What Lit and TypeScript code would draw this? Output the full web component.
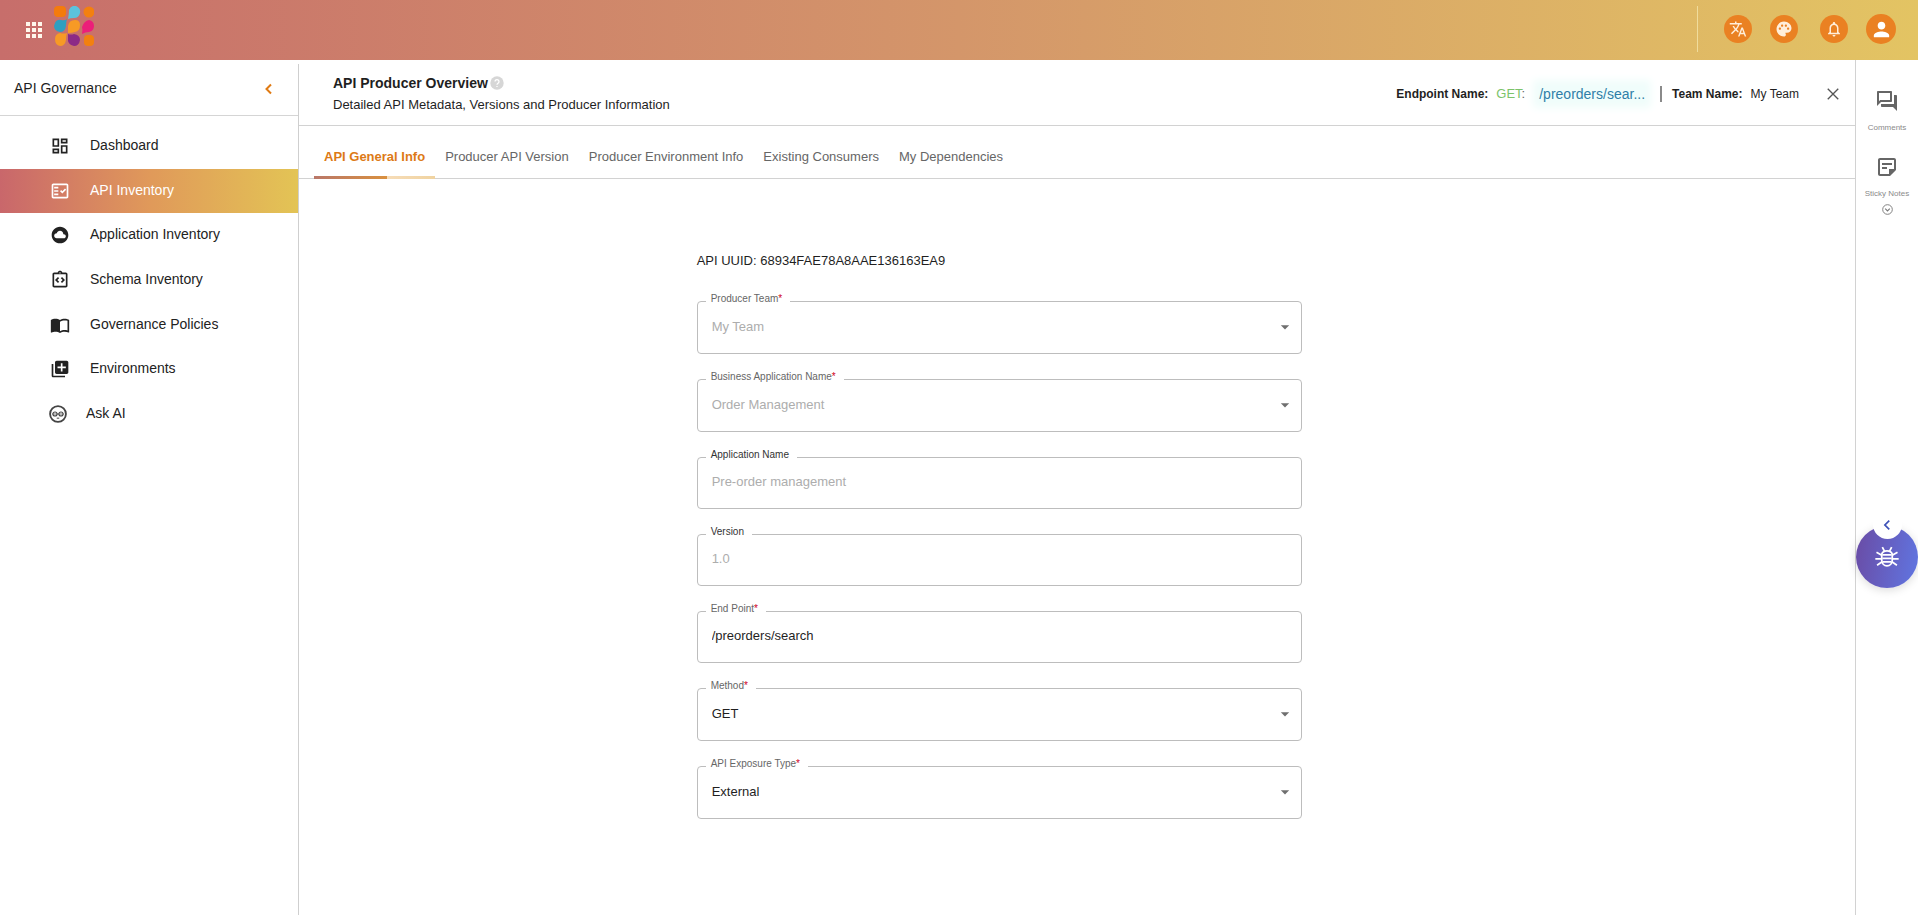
import { LitElement, html, css, svg, nothing, TemplateResult, SVGTemplateResult } from "lit";
import { customElement, property } from "lit/decorators.js";
import { classMap } from "lit/directives/class-map.js";

const icon = (body: SVGTemplateResult, size = 24, cls = ""): TemplateResult => html`
  <svg class=${cls} width=${size} height=${size} viewBox="0 0 24 24" fill="currentColor" aria-hidden="true">${body}</svg>
`;

const icons = {
  dashboard: svg`<path d="M19 5v2h-4V5h4M9 5v6H5V5h4m10 8v6h-4v-6h4M9 17v2H5v-2h4M21 3h-8v6h8V3zM11 3H3v10h8V3zm10 8h-8v10h8V11zm-10 4H3v6h8v-6z"/>`,
  factCheck: svg`<path fill-rule="evenodd" d="M20 3H4c-1.1 0-2 .9-2 2v14c0 1.1.9 2 2 2h16c1.1 0 2-.9 2-2V5c0-1.1-.9-2-2-2zm0 16H4V5h16v14z"/><path d="M19.41 10.42 17.99 9l-3.17 3.17-1.41-1.42L12 12.16 14.82 15zM5 7h5v2H5zM5 11h5v2H5zM5 15h5v2H5z"/>`,
  cloudCircle: svg`<path d="M12 2C6.48 2 2 6.48 2 12s4.48 10 10 10 10-4.48 10-10S17.52 2 12 2zm4.5 14H8c-1.66 0-3-1.34-3-3s1.34-3 3-3l.14.01C8.58 8.28 10.13 7 12 7c2.21 0 4 1.79 4 4h.5c1.38 0 2.5 1.12 2.5 2.5S17.88 16 16.5 16z"/>`,
  schema: svg`<path d="M11 14.17 8.83 12 11 9.83 9.59 8.41 6 12l3.59 3.59zM14.41 15.59 18 12l-3.59-3.59L13 9.83 15.17 12 13 14.17z"/><path d="M19 3h-4.18C14.4 1.84 13.3 1 12 1s-2.4.84-2.82 2H5c-1.1 0-2 .9-2 2v14c0 1.1.9 2 2 2h14c1.1 0 2-.9 2-2V5c0-1.1-.9-2-2-2zm-7-.25c.41 0 .75.34.75.75s-.34.75-.75.75-.75-.34-.75-.75.34-.75.75-.75zM19 19H5V5h14v14z"/>`,
  book: svg`<path d="M21 5c-1.11-.35-2.33-.5-3.5-.5-1.95 0-4.05.4-5.5 1.5-1.45-1.1-3.55-1.5-5.5-1.5S2.45 4.9 1 6v14.65c0 .25.25.5.5.5.1 0 .15-.05.25-.05C3.1 20.45 5.05 20 6.5 20c1.95 0 4.05.4 5.5 1.5 1.35-.85 3.8-1.5 5.5-1.5 1.65 0 3.35.3 4.75 1.05.1.05.15.05.25.05.25 0 .5-.25.5-.5V6c-.6-.45-1.25-.75-2-1zm0 13.5c-1.1-.35-2.3-.5-3.5-.5-1.7 0-4.15.65-5.5 1.5V8c1.35-.85 3.8-1.5 5.5-1.5 1.2 0 2.4.15 3.5.5v11.5z"/>`,
  queue: svg`<path d="M4 6H2v14c0 1.1.9 2 2 2h14v-2H4V6zm16-4H8c-1.1 0-2 .9-2 2v12c0 1.1.9 2 2 2h12c1.1 0 2-.9 2-2V4c0-1.1-.9-2-2-2zm-1 9h-4v4h-2v-4H9V9h4V5h2v4h4v2z"/>`,
  robot: svg`<g fill="none" stroke="currentColor"><circle cx="12" cy="12" r="9.5" stroke-width="2.2"/><circle cx="8.4" cy="12" r="2.4" stroke-width="1.4"/><circle cx="15.6" cy="12" r="2.4" stroke-width="1.4"/><path d="M10.8 12h2.4M5.2 12H6M18 12h.8M10.5 17h3" stroke-width="1.2"/></g><circle cx="8.4" cy="12" r=".8"/><circle cx="15.6" cy="12" r=".8"/>`,
  forum: svg`<path d="M15 4v7H5.17L4 12.17V4h11m1-2H3c-.55 0-1 .45-1 1v14l4-4h10c.55 0 1-.45 1-1V3c0-.55-.45-1-1-1zm5 4h-2v9H6v2c0 .55.45 1 1 1h11l4 4V7c0-.55-.45-1-1-1z"/>`,
  note: svg`<path d="M19 5v9h-5v5H5V5h14m0-2H5c-1.1 0-2 .9-2 2v14c0 1.1.9 2 2 2h10l6-6V5c0-1.1-.9-2-2-2zm-7 11H7v-2h5v2zm5-4H7V8h10v2z"/><path d="M14 14h6l-6 6z"/>`,
  caretCircle: svg`<circle cx="12" cy="12" r="10.5" fill="none" stroke="currentColor" stroke-width="2"/><path d="m7 10 5 5 5-5" fill="none" stroke="currentColor" stroke-width="2.4"/>`,
  chevronLeft: svg`<path d="M15.41 7.41 14 6l-6 6 6 6 1.41-1.41L10.83 12z"/>`,
  close: svg`<path d="m5 5 14 14M19 5 5 19" fill="none" stroke="currentColor" stroke-width="1.8"/>`,
  apps: svg`<path d="M4 8h4V4H4v4zm6 12h4v-4h-4v4zm-6 0h4v-4H4v4zm0-6h4v-4H4v4zm6 0h4v-4h-4v4zm6-10v4h4V4h-4zm-6 4h4V4h-4v4zm6 6h4v-4h-4v4zm0 6h4v-4h-4v4z"/>`,
  help: svg`<circle cx="12" cy="12" r="11.5" fill="#d6d6d6"/><path d="M8.6 9.6a3.4 3.4 0 1 1 5.2 2.9c-1.2.8-1.8 1.3-1.8 2.7M12 17v2" fill="none" stroke="#fff" stroke-width="2.2"/>`,
  translate: svg`<path d="m12.87 15.07-2.54-2.51.03-.03c1.74-1.94 2.98-4.17 3.71-6.53H17V4h-7V2H8v2H1v1.99h11.17C11.5 7.92 10.44 9.75 9 11.35 8.07 10.32 7.3 9.19 6.69 8h-2c.73 1.63 1.73 3.17 2.98 4.56l-5.09 5.02L4 19l5-5 3.11 3.11.76-2.04zM18.5 10h-2L12 22h2l1.12-3h4.75L21 22h2l-4.5-12zm-2.62 7 1.62-4.33L19.12 17h-3.24z"/>`,
  palette: svg`<path d="M12 2C6.49 2 2 6.49 2 12s4.49 10 10 10c1.38 0 2.5-1.12 2.5-2.5 0-.61-.23-1.2-.64-1.67-.08-.1-.13-.21-.13-.33 0-.28.22-.5.5-.5H16c3.31 0 6-2.69 6-6 0-4.96-4.49-9-10-9zm5.5 11c-.83 0-1.5-.67-1.5-1.5s.67-1.5 1.5-1.5 1.5.67 1.5 1.5-.67 1.5-1.5 1.5zm-3-4c-.83 0-1.5-.67-1.5-1.5S13.67 6 14.5 6s1.5.67 1.5 1.5S15.33 9 14.5 9zM5 11.5c0-.83.67-1.5 1.5-1.5s1.5.67 1.5 1.5S7.33 13 6.5 13 5 12.33 5 11.5zm6-4c0 .83-.67 1.5-1.5 1.5S8 8.33 8 7.5 8.67 6 9.5 6s1.5.67 1.5 1.5z"/>`,
  bell: svg`<path d="M12 22c1.1 0 2-.9 2-2h-4c0 1.1.9 2 2 2zm6-6v-5c0-3.07-1.63-5.64-4.5-6.32V4c0-.83-.67-1.5-1.5-1.5s-1.5.67-1.5 1.5v.68C7.64 5.36 6 7.92 6 11v5l-2 2v1h16v-1l-2-2zm-2 1H8v-6c0-2.48 1.51-4.5 4-4.5s4 2.02 4 4.5v6z"/>`,
  person: svg`<path d="M12 12c2.21 0 4-1.79 4-4s-1.79-4-4-4-4 1.79-4 4 1.79 4 4 4zm0 2c-2.67 0-8 1.34-8 4v2h16v-2c0-2.66-5.33-4-8-4z"/>`,
  bug: svg`<g fill="none" stroke="currentColor" stroke-width="1.5"><path d="M7.5 9.5c.5-1.7 2.3-2.7 4.5-2.7s4 1 4.5 2.7v5c0 3-2 5-4.5 5s-4.5-2-4.5-5z"/><path d="M9.8 7 8 3.5M14.2 7 16 3.5M7.5 10.5 3 8M7.5 13.5H2M7.8 16l-4.3 3M16.500 10.500 21 8M16.500 13.500H22M16.200 16l4.300 3M8 10.200h8M8 13.200h8M8.300 16.200h7.400"/></g>`,
  arrowDown: svg`<path d="m7 10 5 5 5-5z"/>`,
};

@customElement("brand-logo")
export class BrandLogo extends LitElement {
  static styles = css`
    :host { display: block; line-height: 0; }
  `;
  render() {
    return html`
      <svg width="40" height="40" viewBox="0 0 40 40" role="img" aria-label="Home">
        <rect x="0" y="0" width="12" height="11" rx="4" fill="#f47b0c"/>
        <path d="M15 4q2-5 7-4 5 2 4 7-1 5-6 5-4 0-6 1 1-5 1-9z" fill="#5cc3dc"/>
        <circle cx="35" cy="6" r="5.5" fill="#f3800f"/>
        <path d="M1 17q2-4 6-3 4 1 6-1-1 3-1 7-1 6-6 6-6-1-6-6z" fill="#2f9fc0"/>
        <path d="M14 20q1-6 7-6 5 0 5 5 0 6-5 7-3 1-7 1 0-4 0-7z" fill="#f79a25"/>
        <path d="M28 21q2-6 7-7 5 1 5 6 0 5-5 6-4 0-7 2 1-4 0-7z" fill="#ec1f79"/>
        <path d="M1 33q0-5 5-6 4 1 7 0-1 3-1 7-1 6-6 6-5-1-5-7z" fill="#f79a25"/>
        <path d="M14 28q3 1 6 0 6 1 6 6-1 6-6 6-5-1-6-5 0-3 0-7z" fill="#8c2a86"/>
        <rect x="30" y="29" width="10" height="11" rx="4" fill="#f3800f"/>
      </svg>
    `;
  }
}

@customElement("side-nav")
export class SideNav extends LitElement {
  static styles = css`
    :host { display: block; }
    .head {
      display: flex; align-items: center; justify-content: space-between;
      box-sizing: border-box; height: 52px; padding: 0 22px 4px 14px;
      border-bottom: 1px solid #d5d5d5; font-size: 14px;
    }
    .collapse {
      display: flex; padding: 2px 0 0; border: 0; background: none; color: #e07a12; cursor: pointer;
    }
    .list {
      display: grid; grid-auto-rows: 1fr; height: 312px;
      margin: 8px 0 0; padding: 0; list-style: none;
    }
    .link {
      display: flex; align-items: center; gap: 20px; height: 100%;
      padding-left: 50px; color: #222; font-size: 14px; text-decoration: none;
    }
    .text { padding-bottom: 2px; }
    .active {
      color: #fff;
      background: linear-gradient(90deg, #c9676b 0%, #e0995a 50%, #e3c455 100%);
    }
    .assistant { padding-left: 48px; gap: 18px; }
    .assistant .glyph { color: #444; }
  `;

  private items = [
    { label: "Dashboard", glyph: icons.dashboard },
    { label: "API Inventory", glyph: icons.factCheck, active: true },
    { label: "Application Inventory", glyph: icons.cloudCircle },
    { label: "Schema Inventory", glyph: icons.schema },
    { label: "Governance Policies", glyph: icons.book },
    { label: "Environments", glyph: icons.queue },
    { label: "Ask AI", glyph: icons.robot, assistant: true },
  ];

  render() {
    return html`
      <div class="head">
        <span>API Governance</span>
        <button class="collapse" aria-label="Collapse menu">
          <svg width="14" height="14" viewBox="0 0 14 14" aria-hidden="true">
            <path d="M9 2.500 4.500 7 9 11.500" fill="none" stroke="currentColor" stroke-width="2"/>
          </svg>
        </button>
      </div>
      <nav aria-label="API Governance">
        <ul class="list">
          ${this.items.map(
            (i) => html`
              <li>
                <a href="#" aria-current=${i.active ? "page" : nothing}
                  class=${classMap({ link: true, active: !!i.active, assistant: !!i.assistant })}>
                  ${icon(i.glyph, 20, "glyph")}<span class="text">${i.label}</span>
                </a>
              </li>
            `
          )}
        </ul>
      </nav>
    `;
  }
}

@customElement("outlined-field")
export class OutlinedField extends LitElement {
  @property() label = "";
  @property() value = "";
  @property({ type: Boolean }) required = false;
  @property({ type: Boolean }) disabled = false;
  @property({ type: Boolean }) dropdown = false;

  static styles = css`
    :host { display: block; }
    .box {
      min-width: 0; margin: 0; padding: 0 0 8px;
      border: 1px solid #bdbdbd; border-radius: 4px;
    }
    .caption {
      margin-left: 8px; padding: 0 8px 4px 5px;
      color: #666; font-size: 10px; line-height: 12px;
    }
    .plain { color: #333; }
    .star { color: #d0021b; }
    .control { display: grid; align-items: center; }
    .input {
      grid-area: 1 / 1; box-sizing: border-box; width: 100%; height: 35px;
      margin: 0; padding: 0 14px 2px; border: 0; outline: 0; background: none;
      appearance: none; border-radius: 0;
      color: #1f1f1f; font: inherit; font-size: 13px;
    }
    .pick { height: 36px; }
    .input:disabled { color: #adadad; opacity: 1; }
    .arrow { grid-area: 1 / 1; justify-self: end; margin-right: 6px; color: #6f6f6f; pointer-events: none; }
  `;

  render() {
    return html`
      <fieldset class="box">
        <legend class=${classMap({ caption: true, plain: !this.required })}>
          <label for="field">${this.label}${this.required ? html`<span class="star">*</span>` : nothing}</label>
        </legend>
        <div class="control">
          ${this.dropdown
            ? html`<select id="field" class="input pick" ?disabled=${this.disabled} ?required=${this.required}>
                  <option selected>${this.value}</option></select
                >${icon(icons.arrowDown, 20, "arrow")}`
            : html`<input id="field" class="input" type="text" .value=${this.value}
                ?disabled=${this.disabled} ?required=${this.required} />`}
        </div>
      </fieldset>
    `;
  }
}

@customElement("app-root")
export class AppRoot extends LitElement {
  static styles = css`
    :host {
      display: flex; flex-direction: column; min-height: 100vh;
      background: #fff; color: #1f1f1f;
      font-family: "Liberation Sans", Arial, sans-serif; font-size: 13px;
    }
    button { font: inherit; cursor: pointer; }
    .topbar {
      display: flex; align-items: center; box-sizing: border-box; height: 60px;
      padding: 0 22px; background: linear-gradient(90deg, #c76e6b, #d4966a 50%, #e3c463);
    }
    .apps { display: flex; padding: 0; margin-right: 8px; border: 0; background: none; color: #fff8ec; }
    .brand { padding-bottom: 8px; }
    .tools { display: flex; align-items: center; gap: 18px; margin-left: auto; padding-bottom: 2px; }
    .rule { width: 1px; height: 46px; margin-right: 8px; background: #f0dc9c; }
    .round {
      display: grid; place-items: center; width: 28px; height: 28px; padding: 0;
      border: 0; border-radius: 50%; background: #ea8122; color: #ffeeda;
    }
    .bell-slot { margin-left: 4px; }
    .avatar { width: 30px; height: 30px; color: #fff; }

    .body { display: flex; flex: 1; }
    .side { flex: none; width: 298px; margin-top: 4px; border-right: 1px solid #cfcfcf; }
    .main { flex: 1; min-width: 0; }

    .page-head {
      display: flex; align-items: center; justify-content: space-between; box-sizing: border-box;
      height: 66px; padding: 2px 13px 0 34px; border-bottom: 1px solid #d2d2d2;
    }
    .title { display: flex; align-items: center; gap: 2px; margin: 0; font-size: 14px; line-height: 20px; }
    .subtitle { margin: 2px 0 0; line-height: 20px; }
    .facts { display: flex; align-items: center; font-size: 12px; }
    .verb { margin-left: 8px; font-size: 13px; color: #7cc36a; }
    .colon { color: #666; }
    .path {
      margin-left: 14px; margin-right: 15px; color: #2f7fa8; font-size: 14px; text-decoration: none;
      background: #f0fdfb; box-shadow: 0 0 8px 6px #f0fdfb;
    }
    .bar { width: 2px; height: 16px; margin-right: 10px; background: #8a8a8a; }
    .team { margin-left: 8px; }
    .close { display: flex; margin-left: 25px; padding: 0; border: 0; background: none; color: #555; }

    .tabs { display: flex; box-sizing: border-box; height: 53px; padding-left: 15px; border-bottom: 1px solid #d2d2d2; }
    .tab {
      margin-bottom: -1px; padding: 12px 10px 0; border: 0; border-bottom: 3px solid transparent;
      background: none; color: #666; font-size: 13px; line-height: 20px;
    }
    .tab-active {
      color: #dd7a16; font-weight: bold;
      border-image: linear-gradient(90deg, #b9776a 0%, #d9903f 60%, #f6dcb8 60%, #f0d3a0 100%) 1;
    }

    .panel { display: grid; grid-template-columns: 23fr 35fr 32fr; padding: 71px 0 32px; }
    .form { grid-column: 2; display: grid; gap: 17px; }
    .uuid { margin: 0 0 4px; line-height: 22px; }

    .rail {
      display: flex; flex-direction: column; align-items: center; flex: none; box-sizing: border-box;
      width: 63px; padding-top: 29px; border-left: 1px solid #d2d2d2;
    }
    .rail-item {
      display: flex; flex-direction: column; align-items: center; gap: 9px;
      padding: 0; margin-bottom: 21px; border: 0; background: none; color: #666;
    }
    .rail-label { color: #8a8a8a; font-size: 8px; line-height: 12px; }
    .more { display: flex; margin-top: -17px; padding: 0; border: 0; background: none; color: #777; }

    .helper { position: fixed; right: 0; top: 510px; display: grid; justify-items: center; width: 62px; }
    .bug {
      display: grid; place-items: center; grid-area: 1 / 1; width: 62px; height: 62px; margin-top: 16px; padding: 0;
      border: 0; border-radius: 50%; color: #fff; box-sizing: border-box;
      background: linear-gradient(100deg, #6a4ba4, #6076e2); box-shadow: 0 2px 10px #00000026;
    }
    .expand {
      display: grid; place-items: center; grid-area: 1 / 1; align-self: start; width: 29px; height: 29px; padding: 0;
      border: 0; border-radius: 50%; background: #fff; color: #3d52b8;
    }
  `;

  private tabs = [
    "API General Info",
    "Producer API Version",
    "Producer Environment Info",
    "Existing Consumers",
    "My Dependencies",
  ];

  private fields = [
    { label: "Producer Team", value: "My Team", required: true, disabled: true, dropdown: true },
    { label: "Business Application Name", value: "Order Management", required: true, disabled: true, dropdown: true },
    { label: "Application Name", value: "Pre-order management", required: false, disabled: true, dropdown: false },
    { label: "Version", value: "1.0", required: false, disabled: true, dropdown: false },
    { label: "End Point", value: "/preorders/search", required: true, disabled: false, dropdown: false },
    { label: "Method", value: "GET", required: true, disabled: false, dropdown: true },
    { label: "API Exposure Type", value: "External", required: true, disabled: false, dropdown: true },
  ];

  render() {
    return html`
      <header class="topbar">
        <button class="apps" aria-label="Applications">${icon(icons.apps)}</button>
        <brand-logo class="brand"></brand-logo>
        <div class="tools">
          <span class="rule"></span>
          <button class="round" aria-label="Language">${icon(icons.translate, 18)}</button>
          <button class="round" aria-label="Theme">${icon(icons.palette, 18)}</button>
          <button class="round bell-slot" aria-label="Notifications">${icon(icons.bell, 18)}</button>
          <button class="round avatar" aria-label="Account">${icon(icons.person, 23)}</button>
        </div>
      </header>

      <div class="body">
        <side-nav class="side"></side-nav>

        <main class="main">
          <div class="page-head">
            <div>
              <h1 class="title">API Producer Overview ${icon(icons.help, 14)}</h1>
              <p class="subtitle">Detailed API Metadata, Versions and Producer Information</p>
            </div>
            <div class="facts">
              <b>Endpoint Name:</b>
              <span class="verb">GET<span class="colon">:</span></span>
              <a class="path" href="#">/preorders/sear...</a>
              <span class="bar"></span>
              <b>Team Name:</b>
              <span class="team">My Team</span>
              <button class="close" aria-label="Close">${icon(icons.close, 18)}</button>
            </div>
          </div>

          <div class="tabs" role="tablist">
            ${this.tabs.map(
              (t, i) => html`<button role="tab" aria-selected=${i === 0 ? "true" : "false"}
                class=${classMap({ tab: true, "tab-active": i === 0 })}>${t}</button>`
            )}
          </div>

          <div class="panel">
            <form class="form">
              <p class="uuid">API UUID: 68934FAE78A8AAE136163EA9</p>
              ${this.fields.map(
                (f) => html`<outlined-field .label=${f.label} .value=${f.value} ?required=${f.required}
                  ?disabled=${f.disabled} ?dropdown=${f.dropdown}></outlined-field>`
              )}
            </form>
          </div>
        </main>

        <aside class="rail">
          <button class="rail-item">${icon(icons.forum)}<span class="rail-label">Comments</span></button>
          <button class="rail-item">${icon(icons.note)}<span class="rail-label">Sticky Notes</span></button>
          <button class="more" aria-label="Show more">${icon(icons.caretCircle, 11)}</button>
        </aside>
      </div>

      <div class="helper">
        <button class="bug" aria-label="Report a bug">${icon(icons.bug, 28)}</button>
        <button class="expand" aria-label="Expand">${icon(icons.chevronLeft, 20)}</button>
      </div>
    `;
  }
}
